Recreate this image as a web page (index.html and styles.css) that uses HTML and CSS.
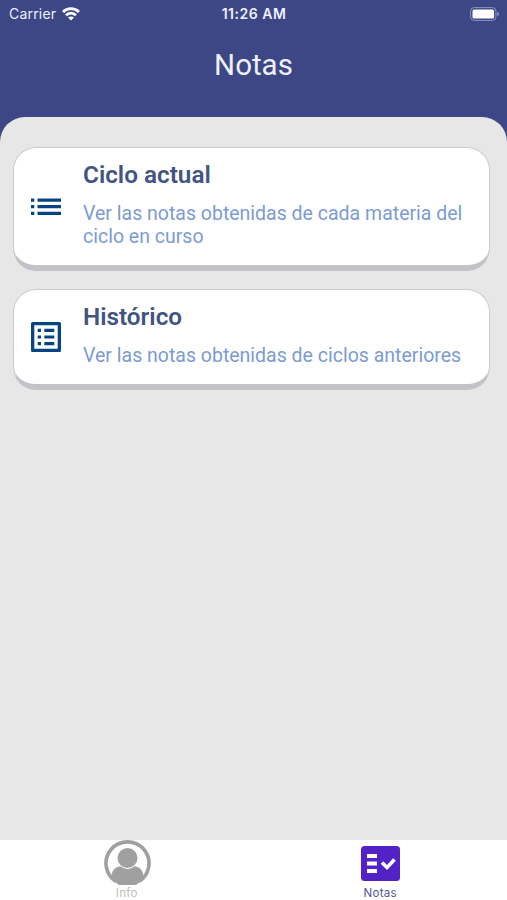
FILE: index.html
```html
<!DOCTYPE html>
<html lang="es">

<head>
    <meta charset="utf-8">
    <title>Notas</title>
    <link rel="stylesheet" href="styles.css">
</head>

<body>
    <header class="header">
        <div class="status-bar">
            <div class="carrier">
                <span class="carrier-name">Carrier</span>
                <svg class="wifi" viewBox="0 0 18 14" fill="none" stroke="#fff" stroke-width="2.8">
                    <path d="M1 5C5.400 .6 12.600 .6 17 5" />
                    <path d="M4 8.200C6.800 5.300 11.200 5.300 14 8.200" />
                    <path d="M9 13.600L6 10.600C7.700 9.100 10.300 9.100 12 10.600Z" fill="#fff" stroke="none" />
                </svg>
            </div>
            <div class="time">11:26 AM</div>
            <svg class="battery" viewBox="0 0 30 14">
                <rect x=".6" y=".6" width="25.400" height="12.800" rx="3.500" fill="none" stroke="#8d92c4" />
                <rect x="2.500" y="2.500" width="21.600" height="9" rx="1.500" fill="#fff" />
                <path d="M27.300 5C29.700 5.500 29.700 8.500 27.300 9Z" fill="#8d92c4" />
            </svg>
        </div>
        <h1 class="title">Notas</h1>
    </header>

    <main class="content">
        <a class="card">
            <svg class="card-icon" viewBox="0 0 30 30" fill="#084482">
                <path d="M0 6.500h3.300v3.200H0zM0 13.100h3.300v3.200H0zM0 19.700h3.300v3.200H0zM6.500 6.500H30v3.200H6.500zM6.500 13.100H30v3.200H6.500zM6.500 19.700H30v3.200H6.500z" />
            </svg>
            <div class="card-text">
                <h2 class="card-title">Ciclo actual</h2>
                <p class="card-description">Ver las notas obtenidas de cada materia del ciclo en curso</p>
            </div>
        </a>
        <a class="card">
            <svg class="card-icon" viewBox="0 0 30 30" fill="#084482">
                <path fill-rule="evenodd" d="M1.500 0h27Q30 0 30 1.500v27Q30 30 28.500 30h-27Q0 30 0 28.500v-27Q0 0 1.500 0zM3.300 3.300v23.400h23.400V3.300z" />
                <path d="M6.700 6.800H10V10H6.700zM6.700 13.400H10v3.200H6.700zM6.700 20H10v3.200H6.700zM13.300 6.800h10V10h-10zM13.300 13.400h10v3.200h-10zM13.300 20h10v3.200h-10z" />
            </svg>
            <div class="card-text">
                <h2 class="card-title">Histórico</h2>
                <p class="card-description">Ver las notas obtenidas de ciclos anteriores</p>
            </div>
        </a>
    </main>

    <nav class="tab-bar">
        <a class="tab">
            <svg class="info-icon" viewBox="0 0 48 46" fill="#a0a0a0">
                <path d="M13 41.500A21.500 21.500 0 1 1 36 41.500" fill="none" stroke="#a0a0a0" stroke-width="3.600" />
                <circle cx="24.500" cy="18" r="10" />
                <path d="M8.500 38C8.500 31.500 11 27 17.500 26.300Q24.500 32 31.500 26.300C38 27 40.500 31.500 40.500 38Q37 42.500 33 45H16Q12 42.500 8.500 38z" />
            </svg>
            <span class="tab-label">Info</span>
        </a>
        <a class="tab tab-active">
            <svg class="notes-icon" viewBox="0 0 39 35">
                <rect width="39" height="35" rx="3.500" fill="#5222c6" />
                <path d="M6 8h10v4H6zM6 15.500h10v4H6zM6 23h10v4H6z" fill="#fff" />
                <path d="M21 16.500l5 5 7.500-8" fill="none" stroke="#fff" stroke-width="3.600" />
            </svg>
            <span class="tab-label">Notas</span>
        </a>
    </nav>
</body>

</html>
```

FILE: styles.css
```css
* {
    box-sizing: border-box;
}
body {
    display: flex;
    flex-direction: column;
    height: 900px;
    margin: 0;
    background-color: #3d4785;
    font-family: Roboto, sans-serif;
}
h1,
h2,
p {
    margin: 0;
}
.header {
    height: 117px;
    color: #eef0ff;
}
.status-bar {
    display: grid;
    grid-template-columns: 1fr auto 1fr;
    align-items: center;
    height: 27px;
    padding: 0 8px 0 9px;
    font-family: Inter, sans-serif;
    font-size: 14px;
}
.carrier {
    display: flex;
    align-items: center;
    gap: 6px;
}
.carrier-name {
    letter-spacing: 0.2px;
}
.wifi {
    width: 18px;
    height: 14px;
}
.time {
    font-size: 14px;
    font-weight: 600;
    letter-spacing: 0.5px;
}
.battery {
    justify-self: end;
    width: 30px;
    height: 14px;
    margin-right: -1px;
}
.title {
    margin-top: 19px;
    font-size: 29.5px;
    font-weight: 400;
    line-height: 38px;
    text-align: center;
}
.content {
    display: flex;
    flex: 1;
    flex-direction: column;
    gap: 18px;
    padding: 30px 17px 0 13px;
    border-radius: 25px 25px 0 0;
    background-color: #e7e7e7;
}
.card {
    display: flex;
    align-items: center;
    padding: 11px 20px 17px 17px;
    border: 1px solid #cbcbcd;
    border-bottom: 6px solid #c2c2c9;
    border-radius: 23px;
    background-color: #fff;
}
.card-icon {
    flex: none;
    width: 30px;
    height: 30px;
    margin: 6px 22px 0 0;
}
.card-title {
    margin-bottom: 11px;
    color: #425581;
    font-size: 24.3px;
    font-weight: 600;
    line-height: 32px;
}
.card-description {
    color: #7c9bd4;
    font-size: 19.5px;
    line-height: 23px;
}
.tab-bar {
    display: flex;
    height: 60px;
    background-color: #fff;
}
.tab {
    display: flex;
    flex: 1;
    flex-direction: column;
    align-items: center;
    color: #bdbdbd;
}
.tab-active {
    color: #54579c;
}
.info-icon {
    width: 48px;
    height: 46px;
}
.notes-icon {
    width: 39px;
    height: 35px;
    margin: 6px 0 5px;
}
.tab-label {
    font-family: Inter, sans-serif;
    font-size: 11.5px;
    line-height: 14px;
    letter-spacing: 0.3px;
}
```
